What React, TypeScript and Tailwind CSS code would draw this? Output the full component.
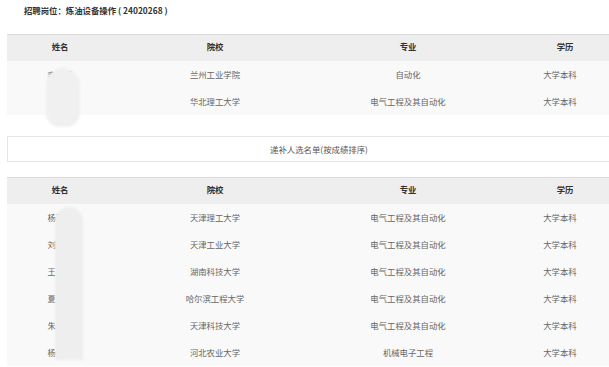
import React from "react";

type Row = { name: string; school: string; major: string; degree: string };

const hired: Row[] = [
  { name: "李某某", school: "兰州工业学院", major: "自动化", degree: "大学本科" },
  { name: "张某某", school: "华北理工大学", major: "电气工程及其自动化", degree: "大学本科" },
];

const backups: Row[] = [
  { name: "杨某某", school: "天津理工大学", major: "电气工程及其自动化", degree: "大学本科" },
  { name: "刘某某", school: "天津工业大学", major: "电气工程及其自动化", degree: "大学本科" },
  { name: "王三某", school: "湖南科技大学", major: "电气工程及其自动化", degree: "大学本科" },
  { name: "夏某某", school: "哈尔滨工程大学", major: "电气工程及其自动化", degree: "大学本科" },
  { name: "朱某某", school: "天津科技大学", major: "电气工程及其自动化", degree: "大学本科" },
  { name: "杨某某", school: "河北农业大学", major: "机械电子工程", degree: "大学本科" },
];

const cols = ["w-[106px]", "w-[204px]", "w-[182px]", "w-[132px]"];

const ResultTable: React.FC<{ rows: Row[]; mask: string }> = ({ rows, mask }) => {
  return (
    <div className="relative w-[624px] ml-[7px]">
      <div className="flex h-[27px] items-center border-t border-[#dcdcdc] bg-[#eeeeee] text-[#333] font-bold pb-[3px]">
        <div className={`${cols[0]} text-center`}>姓名</div>
        <div className={`${cols[1]} text-center`}>院校</div>
        <div className={`${cols[2]} text-center`}>专业</div>
        <div className={`${cols[3]} text-center`}>学历</div>
      </div>
      {rows.map((r, i) => (
        <div key={i} className="flex h-[27px] items-center bg-[#f9f9f9] text-[#666] pb-[1px]">
          <div className={`${cols[0]} text-center`}>{r.name}</div>
          <div className={`${cols[1]} text-center`}>{r.school}</div>
          <div className={`${cols[2]} text-center`}>{r.major}</div>
          <div className={`${cols[3]} text-center pr-[10px]`}>{r.degree}</div>
        </div>
      ))}
      {/* privacy blur over the names */}
      <div className={mask} />
    </div>
  );
};

export default function App() {
  return (
    <div className="w-[609px] h-[367px] overflow-hidden bg-white text-[8.4px] leading-none font-['Noto_Sans_CJK_SC','Noto_Sans',sans-serif]">
      <div className="h-[34px] pl-[24px] pt-[6px] font-bold text-[#333]">
        招聘岗位：炼油设备操作 ( 24020268 )
      </div>
      <ResultTable
        rows={hired}
        mask="absolute left-[39px] top-[34px] w-[34px] h-[59px] rounded-t-[17px] rounded-b-[14px] bg-[#f0f0f0] blur-[1px]"
      />
      <div className="mt-[21px] ml-[7px] w-[624px] h-[26px] flex items-center justify-center border border-[#e6e6e6] bg-white text-[#555]">
        递补人选名单(按成绩排序)
      </div>
      <div className="mt-[15px]">
        <ResultTable
          rows={backups}
          mask="absolute left-[48px] top-[30px] w-[28px] h-[153px] rounded-t-[14px] bg-[#eeeeee] blur-[1px]"
        />
      </div>
    </div>
  );
}
